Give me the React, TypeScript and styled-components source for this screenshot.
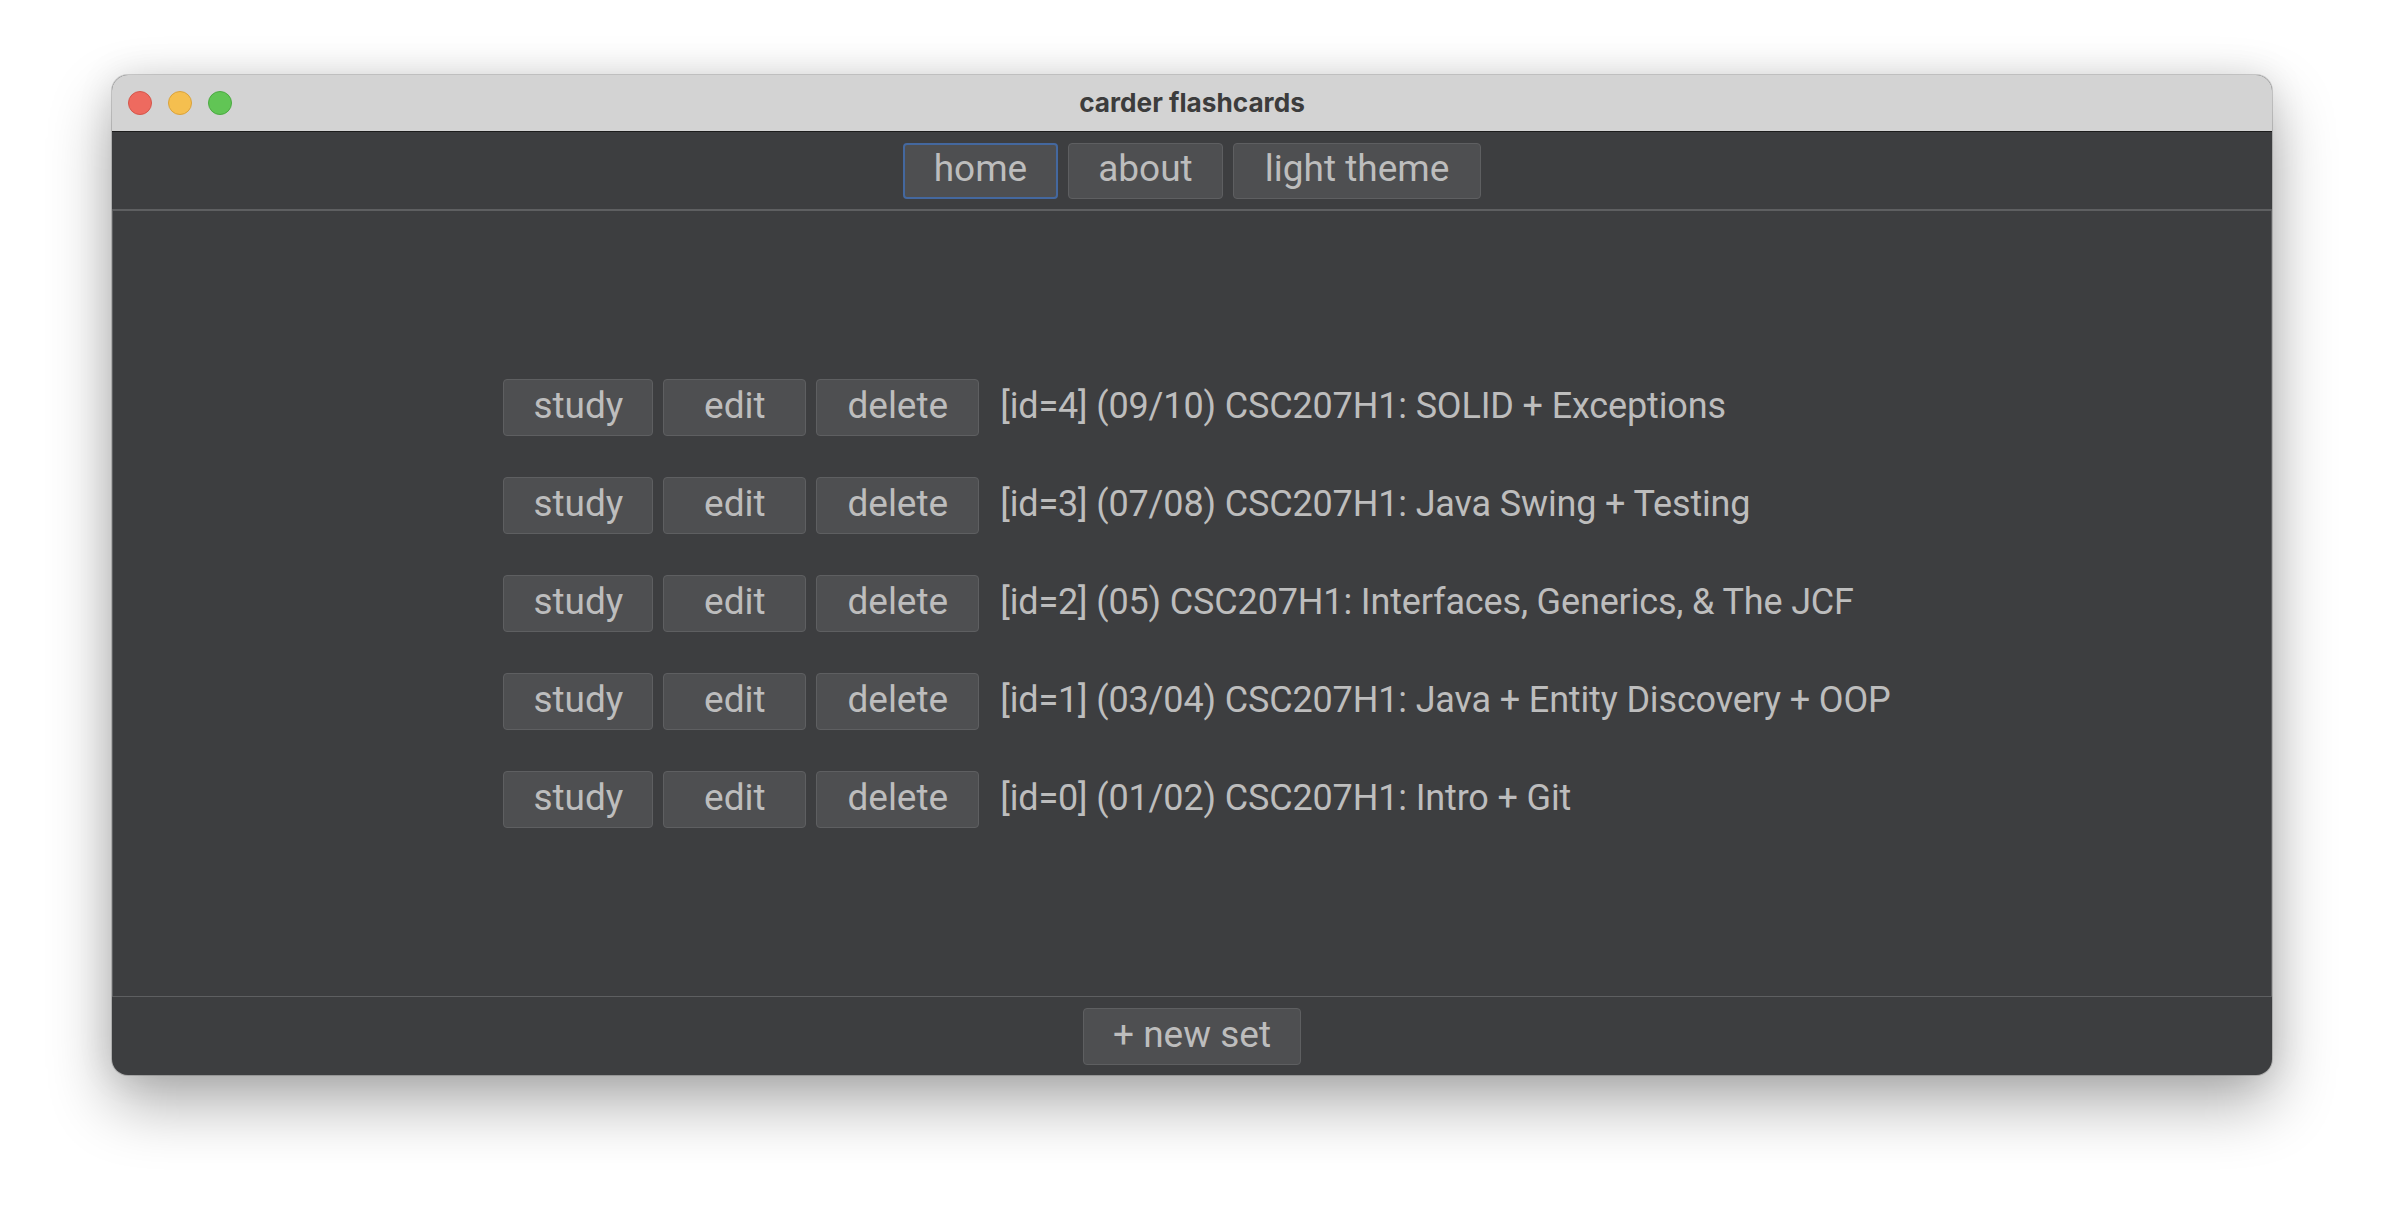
import React from "react";
import styled, { createGlobalStyle } from "styled-components";

const GlobalStyle = createGlobalStyle`
  html, body {
    margin: 0;
    padding: 0;
    background: #ffffff;
  }
  body {
    font-family: Roboto, "Liberation Sans", sans-serif;
  }
  * {
    box-sizing: border-box;
  }
`;

const Page = styled.div`
  width: 2384px;
  height: 1224px;
  padding: 75px 112px 149px;
  background: #ffffff;
`;

const Window = styled.div`
  height: 1000px;
  display: flex;
  flex-direction: column;
  border-radius: 16px;
  overflow: hidden;
  background: #3d3e40;
  box-shadow: 0 0 0 1px rgba(0, 0, 0, 0.16), 0 28px 64px rgba(0, 0, 0, 0.33),
    0 0 36px rgba(0, 0, 0, 0.1);
`;

const TitleBar = styled.div`
  height: 57px;
  flex: none;
  display: grid;
  grid-template-columns: 1fr auto 1fr;
  align-items: center;
  background: #d3d3d3;
  border-bottom: 1px solid #1c1c1c;
`;

const Lights = styled.div`
  display: flex;
  gap: 16px;
  padding-left: 16px;
`;

const Light = styled.span<{ $fill: string; $edge: string }>`
  width: 24px;
  height: 24px;
  border-radius: 50%;
  background: ${(p) => p.$fill};
  border: 1px solid ${(p) => p.$edge};
`;

const Title = styled.div`
  font-family: Inter, Roboto, sans-serif;
  font-weight: 700;
  font-size: 26.2px;
  color: #3c3c3c;
  padding-bottom: 2px;
`;

const Toolbar = styled.div`
  height: 78px;
  flex: none;
  display: flex;
  justify-content: center;
  align-items: center;
  gap: 10px;
  border-bottom: 1px solid #5e5f61;
`;

const Button = styled.button<{ $focused?: boolean; $h?: number; $pad?: number }>`
  height: ${(p) => p.$h ?? 57}px;
  min-width: 143px;
  padding: 0 ${(p) => p.$pad ?? 29}px 4px;
  margin: 0;
  font-family: Roboto, "Liberation Sans", sans-serif;
  font-size: 37px;
  line-height: 1;
  color: #bdbdbd;
  background: #4e4f51;
  border: ${(p) => (p.$focused ? "2px solid #44689f" : "1px solid #5e5f61")};
  border-radius: 4px;
  cursor: pointer;
  display: inline-flex;
  align-items: center;
  justify-content: center;
  white-space: nowrap;
`;

const Content = styled.div`
  flex: 1;
  display: flex;
  justify-content: center;
  align-items: center;
  border: 1px solid #5e5f61;
`;

const List = styled.div`
  display: flex;
  flex-direction: column;
  gap: 41px;
  padding-left: 10px;
`;

const Row = styled.div`
  display: flex;
  align-items: center;
  gap: 10px;
`;

const SetLabel = styled.span`
  padding: 0 0 4px 11px;
  font-size: 36px;
  letter-spacing: -0.15px;
  line-height: 1;
  color: #bdbdbd;
  white-space: nowrap;
`;

const BottomBar = styled.div`
  height: 78px;
  flex: none;
  display: flex;
  justify-content: center;
  align-items: center;
`;

const sets = [
  { id: 4, name: "(09/10) CSC207H1: SOLID + Exceptions" },
  { id: 3, name: "(07/08) CSC207H1: Java Swing + Testing" },
  { id: 2, name: "(05) CSC207H1: Interfaces, Generics, & The JCF" },
  { id: 1, name: "(03/04) CSC207H1: Java + Entity Discovery + OOP" },
  { id: 0, name: "(01/02) CSC207H1: Intro + Git" },
];

export default function App() {
  return (
    <>
      <GlobalStyle />
      <Page>
        <Window>
          <TitleBar>
            <Lights>
              <Light $fill="#ee6a5f" $edge="#d4564b" />
              <Light $fill="#f5bf4f" $edge="#d9a23c" />
              <Light $fill="#61c555" $edge="#4ca942" />
            </Lights>
            <Title>carder flashcards</Title>
            <div />
          </TitleBar>
          <Toolbar>
            <Button $focused $h={56}>home</Button>
            <Button $h={56}>about</Button>
            <Button $h={56} $pad={31}>light theme</Button>
          </Toolbar>
          <Content>
            <List>
              {sets.map((s) => (
                <Row key={s.id}>
                  <Button>study</Button>
                  <Button>edit</Button>
                  <Button $pad={30}>delete</Button>
                  <SetLabel>
                    [id={s.id}] {s.name}
                  </SetLabel>
                </Row>
              ))}
            </List>
          </Content>
          <BottomBar>
            <Button>+ new set</Button>
          </BottomBar>
        </Window>
      </Page>
    </>
  );
}
